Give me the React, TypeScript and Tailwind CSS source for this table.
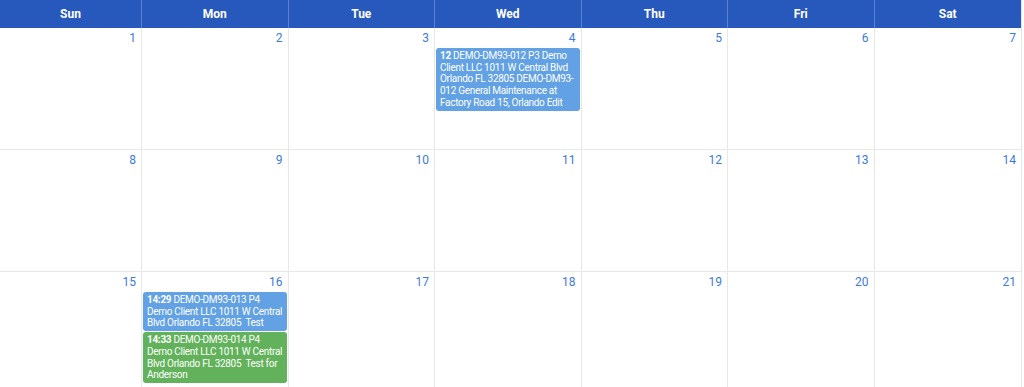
const days = ['Sun', 'Mon', 'Tue', 'Wed', 'Thu', 'Fri', 'Sat'];

// lines are kept as in the screenshot so the wraps match
type Ev = { time: string; lines: string[]; color: string };

const events: Record<number, Ev[]> = {
	4: [
		{
			time: '12',
			lines: [
				'DEMO-DM93-012 P3 Demo',
				'Client LLC 1011 W Central Blvd',
				'Orlando FL 32805 DEMO-DM93-',
				'012 General Maintenance at',
				'Factory Road 15, Orlando Edit',
			],
			color: 'bg-[#62a1e3]',
		},
	],
	16: [
		{
			time: '14:29',
			lines: ['DEMO-DM93-013 P4', 'Demo Client LLC 1011 W Central', 'Blvd Orlando FL 32805\u00a0 Test'],
			color: 'bg-[#62a1e3]',
		},
		{
			time: '14:33',
			lines: ['DEMO-DM93-014 P4', 'Demo Client LLC 1011 W Central', 'Blvd Orlando FL 32805\u00a0 Test for', 'Anderson'],
			color: 'bg-[#62b25b]',
		},
	],
};

const weeks = [
	[1, 2, 3, 4, 5, 6, 7],
	[8, 9, 10, 11, 12, 13, 14],
	[15, 16, 17, 18, 19, 20, 21],
];

export default function App() {
	return (
		<div className="w-[1024px] h-[387px] overflow-hidden bg-white font-['Roboto',sans-serif]">
			<div className="w-[1022px] border-r border-[#e3e6ea]">
				<div className="grid grid-cols-[142px_repeat(6,1fr)] h-[28px] bg-[#2758bc]">
					{days.map((d, i) => (
						<div
							key={d}
							className={`flex items-center justify-center text-white text-[12px] font-bold ${i < 6 ? 'border-r border-[#5b80cc]' : ''}`}
						>
							{d}
						</div>
					))}
				</div>
				{weeks.map((week, wi) => (
					<div key={wi} className="grid grid-cols-[142px_repeat(6,1fr)] h-[122px] border-b border-[#e6e8eb]">
						{week.map((day, di) => (
							<div key={day} className={`flex flex-col min-w-0 ${di < 6 ? 'border-r border-[#e6e8eb]' : ''}`}>
								<div className="text-right pr-[5px] pt-[2px] text-[12px] leading-[16px] text-[#3d7ae0]">{day}</div>
								<div className="flex flex-col gap-[1px] px-[1px] mt-[2px]">
									{(events[day] || []).map((ev, k) => (
										<div
											key={k}
											className={`${ev.color} rounded-[3px] text-white text-[10px] leading-[11.7px] tracking-[-0.3px] pl-[4px] pr-[1px] py-[2px] overflow-hidden`}
										>
											{ev.lines.map((ln, li) => (
												<div key={li} className="whitespace-nowrap">
													{li === 0 && <span className="font-bold">{ev.time} </span>}
													{ln}
												</div>
											))}
										</div>
									))}
								</div>
							</div>
						))}
					</div>
				))}
			</div>
		</div>
	);
}
